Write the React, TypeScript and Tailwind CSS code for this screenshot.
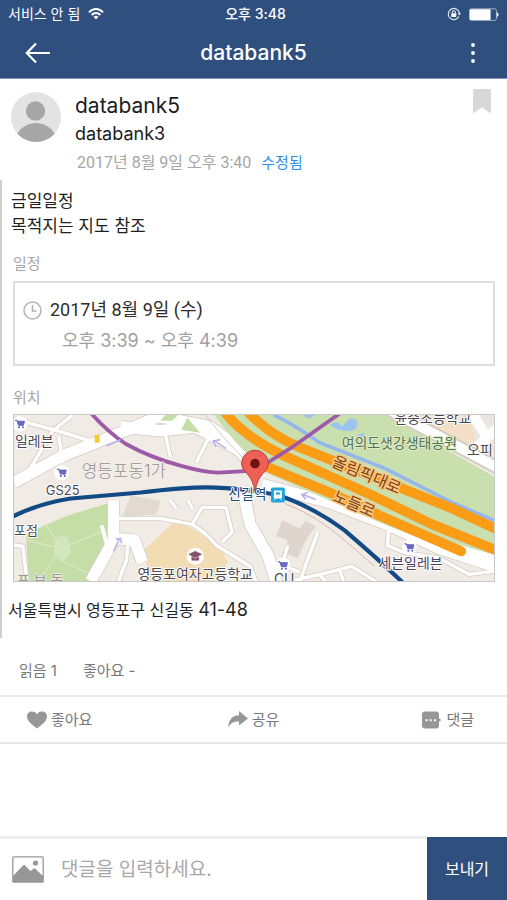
import React from 'react';

function StatusBar() {
  return (
    <div className="grid h-7 grid-cols-3 items-center px-2 text-sm leading-5">
      <div className="flex items-center gap-2">
        <span>서비스 안 됨</span>
        <svg viewBox="0 0 16 12" className="h-3 w-4" aria-hidden="true">
          <g fill="none" stroke="white" strokeWidth="1.9">
            <path d="M1 4.3C5-.1 11-.1 15 4.3" />
            <path d="M3.6 7C6.2 4.3 9.8 4.3 12.4 7" />
          </g>
          <path d="M5.5 8.7Q8 6.6 10.5 8.7L8 11.5z" fill="white" />
        </svg>
      </div>
      <div className="pl-1 text-center font-medium">오후 3:48</div>
      <div className="flex items-center justify-end gap-2">
        <svg viewBox="0 0 14 14" className="size-3.5" aria-hidden="true">
          <path d="M11.9 9.6A5.6 5.6 0 1 1 12.4 6" fill="none" stroke="#dde5f0" strokeWidth="1.2" />
          <path d="M10.6 6h3.4l-1.6 2.6z" fill="#dde5f0" />
          <rect x="4.3" y="6.2" width="5" height="3.8" rx="0.5" fill="white" />
          <path d="M5.3 6.4V5.2a1.5 1.5 0 0 1 3 0v1.2" fill="none" stroke="white" />
        </svg>
        <svg viewBox="0 0 30 13" className="h-[13px] w-[30px]" aria-hidden="true">
          <rect x="0.5" y="0.8" width="27" height="11.6" rx="2" fill="none" stroke="#b9c8de" strokeWidth="0.8" />
          <rect x="0.8" y="1.2" width="20.8" height="10.8" rx="1" fill="white" />
          <path d="M28.4 4.8q1.6 1.8 0 3.6z" fill="white" stroke="white" />
        </svg>
      </div>
    </div>
  );
}

function Header() {
  return (
    <header className="border-b border-[#7f97bb] bg-[#2f4f7f] text-white">
      <StatusBar />
      <div className="flex h-[50px] items-center justify-between px-[25px]">
        <button type="button" aria-label="뒤로" className="w-[26px]">
          <svg viewBox="0 0 26 22" className="h-[22px] w-[26px]" fill="none" stroke="white" strokeWidth="2.2">
            <path d="M25 11H2M11 1.5L1.8 11L11 20.5" />
          </svg>
        </button>
        <h1 className="text-[21px] leading-7 font-medium">databank5</h1>
        <button type="button" aria-label="메뉴" className="flex w-[26px] justify-end pr-[7px]">
          <svg viewBox="0 0 4 22" className="h-[22px] w-1" fill="white">
            <circle cx="2" cy="3" r="1.9" />
            <circle cx="2" cy="11" r="1.9" />
            <circle cx="2" cy="19" r="1.9" />
          </svg>
        </button>
      </div>
    </header>
  );
}

function Profile() {
  return (
    <div className="flex h-[101px] items-start pt-[13px] pr-4 pl-[11px]">
      <svg viewBox="0 0 50 50" className="size-[50px] shrink-0" aria-hidden="true">
        <defs>
          <clipPath id="avatar">
            <circle cx="25" cy="25" r="25" />
          </clipPath>
        </defs>
        <g clipPath="url(#avatar)">
          <rect width="50" height="50" fill="#e3e3e3" />
          <circle cx="24.5" cy="19" r="9.7" fill="#a6a6a6" />
          <path d="M4 46C12 26 38 26 46 46V52H4z" fill="#a6a6a6" />
        </g>
      </svg>
      <div className="ml-[14px] min-w-0 flex-1">
        <div className="text-[21px] leading-7 text-[#1c1c1c]">databank5</div>
        <div className="text-lg leading-7 text-[#1c1c1c]">databank3</div>
        <div className="mt-[3px] flex gap-[10px] pl-[2px] font-['Roboto','Noto_Sans_CJK_KR',sans-serif] text-base leading-6 text-[#a6a6a6]">
          <span>2017년 8월 9일 오후 3:40</span>
          <span className="text-[15px] text-[#2a90ee]">수정됨</span>
        </div>
      </div>
      <button type="button" aria-label="북마크" className="-mt-[3px]">
        <svg viewBox="0 0 18 25" className="h-[25px] w-[18px]">
          <path d="M0 1.5Q0 0 1.5 0H16.500Q18 0 18 1.500V24.500L9 18.500L0 24.500z" fill="#d8d8d8" />
        </svg>
      </button>
    </div>
  );
}

function Cart({ x, y }: { x: number; y: number }) {
  return (
    <g transform={`translate(${x} ${y})`}>
      <circle r="7.500" fill="white" />
      <path d="M-5-3.500H-3L-1.500 1.500H3.500L4.500-2.500H-3" fill="#6a6cc4" stroke="#5c5fc0" strokeWidth="1" />
      <circle cx="-1" cy="3.500" r="1" fill="#5c5fc0" />
      <circle cx="3" cy="3.500" r="1" fill="#5c5fc0" />
    </g>
  );
}

const streets = [
  'M13 418L60 431L92 441',
  'M72 414L52 430L28 470',
  'M58 436L62 462',
  'M190 430L238 438Q250 446 256 462',
  'M165 434L170 456',
  'M208 438L196 462',
  'M118 518H160L192 524Q206 532 216 545L250 566L256 581',
  'M192 524L202 507H226L232 532L222 542',
  'M170 500L176 508M188 500L192 508',
  'M128 536L126 560L118 581',
  'M300 581L318 532M288 545L282 565L300 572M290 581L330 572L352 566L376 581',
  'M390 520L388 545L404 552L440 558L470 574L495 571',
  'M340 570L344 581M320 575L326 581',
  'M13 545L22 546L26 581',
];

const avenues = [
  'M13 482L60 456L130 428L162 414',
  'M120 426L160 430L195 426L240 450L262 478',
  'M150 414L210 426L250 456',
  'M113 500V540L90 581',
  'M113 538L134 540L142 562',
  'M244 494L250 524L268 555L276 581',
  'M262 484L330 502L390 525L440 548L495 566',
];

function LocationMap() {
  return (
    <svg
      viewBox="13 414 482 167"
      preserveAspectRatio="xMidYMid slice"
      className="block h-full w-full"
      role="img"
      aria-label="신길역 주변 지도"
    >
      <rect x="13" y="414" width="482" height="167" fill="#f1ebe5" />

      <path d="M25 534Q45 524 67 515L107 503L109 552L93 581H28z" fill="#c5dda6" />
      <path d="M54 540q6-8 14-2l2 14-8 10-9-8z" fill="#d3e5bb" />
      <path d="M26 540L60 548L104 530M60 560L92 575M45 524L60 548L38 581" fill="none" stroke="#d9e9c4" strokeWidth="1.200" />
      <path d="M143 550L173 522L190 527L218 545L228 562L213 581H150z" fill="#f2dcb4" />
      <path d="M130 495L160 500L156 514L122 516z" fill="#e2dad0" />
      <path d="M282 520L300 528L306 520L316 526L306 540L298 558L284 552L288 540L276 536z" fill="#ddd5ce" />

      <g fill="none" stroke="#d3cac3" strokeLinejoin="round">
        {streets.map((d) => (
          <path key={d} d={d} strokeWidth="5" />
        ))}
        {avenues.map((d) => (
          <path key={d} d={d} strokeWidth="13" />
        ))}
      </g>
      <g fill="none" stroke="white" strokeLinejoin="round">
        {streets.map((d) => (
          <path key={d} d={d} strokeWidth="3.500" />
        ))}
        {avenues.map((d) => (
          <path key={d} d={d} strokeWidth="11.500" />
        ))}
      </g>
      <path d="M101 525L108 550" stroke="white" strokeWidth="4" />
      <path d="M165 414H178L172 420H160z M187 417L200 432L181 429z" fill="#c5dda6" />
      <path d="M205 414Q228 444 262 476" fill="none" stroke="#cfc8c8" />

      <path d="M214 414H386L495 476V556L462 554L380 522L270 474Q238 448 214 414z" fill="#cadfae" />
      <path d="M398 414H495V458z" fill="#f3dfc8" />
      <path d="M470 414H495V458L478 446z" fill="#ece6e2" />
      <path d="M388 408L500 468" stroke="#d3cac3" strokeWidth="14" />
      <path d="M388 408L500 468M500 426L478 446M474 414L490 440" stroke="white" strokeWidth="10" fill="none" />
      <path d="M462 545L500 556V572L462 560z" fill="white" />

      <path d="M303 414Q308 421 316 414z M330 424Q338 418 342 426L350 418Q358 416 358 424Q356 432 346 430Q336 430 330 424z M358 434l6-2 2 4-6 2z" fill="#9cc4ee" />
      <path d="M274 414Q298 426 320 442L386 468L453 502L495 520" fill="none" stroke="#93b7ec" strokeWidth="3.500" />

      <g fill="none" stroke="#eda038" strokeWidth="10" strokeLinecap="round">
        <path d="M245 408Q268 434 303 448L453 508L500 530" />
        <path d="M222 408Q244 438 293 459L373 495L433 524L500 551" />
        <path d="M264 465L330 492L380 515L462 551" />
      </g>
      <g fill="none" stroke="#fb9d14" strokeWidth="9" strokeLinecap="round">
        <path d="M245 408Q268 434 303 448L453 508L500 530" />
        <path d="M222 408Q244 438 293 459L373 495L433 524L500 551" />
        <path d="M264 465L330 492L380 515L462 551" />
      </g>

      <path d="M90 412Q108 432 125 443Q150 457 180 465Q205 472 218 472L255 470L290 448L341 412" fill="none" stroke="#9d5aa8" strokeWidth="3.800" strokeLinejoin="round" />
      <path d="M12 516Q38 503 70 498L140 492Q190 486 215 487Q255 488 285 497Q315 508 345 530Q380 560 404 583" fill="none" stroke="#134a86" strokeWidth="4.200" />
      <path d="M285 503Q318 516 345 540L375 566" fill="none" stroke="#d9b4b0" />

      <g fill="none" stroke="#b5b0ee" strokeWidth="1.500">
        <path d="M106 445L120 439M226 448L214 440M220 439L213 440L216 446M316 499L303 494M308 492L302 494L306 499M113 551L119 538M115 539L120 538L121 543" />
      </g>
      <path d="M94 434h5v8h-5z" fill="#f6c93a" />

      <Cart x={19} y={423} />
      <Cart x={61} y={472} />
      <Cart x={410} y={547} />
      <Cart x={283} y={565} />
      <circle cx="195" cy="556" r="8.500" fill="white" />
      <path d="M188.500 554L195 551L201.500 554L195 557.500z M191.500 556.500V560H198.500V556.500L195 558.500z" fill="#84506a" stroke="#84506a" strokeWidth="0.500" />

      <g fontSize="14" fill="#4b4550" stroke="white" strokeWidth="2" strokeLinejoin="round" paintOrder="stroke">
        <text x="14" y="445">일레븐</text>
        <text x="45" y="494" fontSize="13">GS25</text>
        <text x="13" y="535" fontSize="13">포점</text>
        <text x="228" y="499" fill="#1f4b78">신길역</text>
        <text x="137" y="579">영등포여자고등학교</text>
        <text x="379" y="568" fill="#4a3f66">세븐일레븐</text>
        <text x="274" y="584">CU</text>
        <text x="395" y="422">윤중초등학교</text>
        <text x="468" y="454">오피</text>
        <text x="342" y="447" fill="#547350" stroke="#dcebc9">여의도샛강생태공원</text>
        <text x="81" y="476" fontSize="17" fontWeight="300" fill="#97908d" stroke="#f4efeb">영등포동1가</text>
        <text x="16" y="585" fill="#9c978c" stroke="#e8eadb">표 보 동</text>
      </g>
      <g fontSize="16" fill="#7c4310" stroke="#fbc684" strokeWidth="3" strokeLinejoin="round" paintOrder="stroke">
        <text transform="translate(331 465) rotate(23)">올림픽대로</text>
        <text transform="translate(332 500) rotate(23)">노들로</text>
      </g>

      <rect x="271" y="487" width="14" height="15" rx="2" fill="#20a5dc" />
      <path d="M274 490h8v8h-8z" fill="white" />
      <path d="M275.500 491.500h5v3h-5z M274 500l2-2M282 500l-2-2" fill="#20a5dc" stroke="white" strokeWidth="0.800" />
      <path d="M255 491Q253 479 247 473Q241.500 468 241.500 463A13.500 13.500 0 0 1 268.500 463Q268.500 468 263 473Q257 479 255 491z" fill="#ef5f55" stroke="#b8423c" strokeWidth="1" />
      <circle cx="255" cy="463" r="4.800" fill="#6d1411" />
    </svg>
  );
}

function Post() {
  return (
    <article className="h-[458px] border-l-2 border-[#cfcfcf] pr-3 pl-[9px]">
      <p className="pt-[9px] text-[17px] leading-[25px] text-[#1f1f1f]">
        금일일정
        <br />
        목적지는 지도 참조
      </p>
      <h2 className="mt-[15px] ml-[2px] text-[15px] leading-5 text-[#a6a6a6]">일정</h2>
      <section className="mt-[7px] ml-[2px] h-[85px] border-2 border-[#dedede] pt-[13px] pl-2 text-lg leading-7">
        <div className="flex items-center gap-2">
          <svg viewBox="0 0 19 19" className="size-[19px]" fill="none" stroke="#b3b3b3" strokeWidth="1.5" aria-hidden="true">
            <circle cx="9.500" cy="9.500" r="8.500" />
            <path d="M9.500 4V10H13.500" />
          </svg>
          <span className="font-['Roboto','Noto_Sans_CJK_KR',sans-serif] text-[#2e2e2e]">2017년 8월 9일 (수)</span>
        </div>
        <div className="mt-[3px] pl-[39px] text-[#a0a0a0]">오후 3:39 ~ 오후 4:39</div>
      </section>
      <h2 className="mt-[22px] ml-[2px] text-[15px] leading-5 text-[#a6a6a6]">위치</h2>
      <div className="mt-[6px] ml-[2px] h-[168px] border border-[#c8c8c8]">
        <LocationMap />
      </div>
      <p className="mt-4 -ml-[3px] text-base leading-6 text-[#1f1f1f]">
        서울특별시 영등포구 신길동 <span className="text-lg leading-6">41-48</span>
      </p>
    </article>
  );
}

function Actions() {
  return (
    <div className="grid h-[49px] grid-cols-3 items-center border-y-2 border-[#e8e8e8] text-[15px] leading-6 text-[#777]">
      <button type="button" className="ml-[27px] flex items-center gap-1 justify-self-start">
        <svg viewBox="0 0 20 18" className="h-[18px] w-5" fill="#979797" aria-hidden="true">
          <path d="M10 17.500C6 14 0 10.500 0 5.400C0 2.200 2.300.5 5 .5C7.400.5 9.200 1.800 10 3.500C10.800 1.800 12.600.5 15 .5C17.700.5 20 2.200 20 5.400C20 10.500 14 14 10 17.500z" />
        </svg>
        좋아요
      </button>
      <button type="button" className="flex items-center gap-1 justify-self-center">
        <svg viewBox="0 0 20 17" className="h-[17px] w-5" fill="#979797" aria-hidden="true">
          <path d="M11 0L20 7.500L11 14.500V10.500C5.500 10.500 2.500 12 .5 16.500C.3 9 4 4.500 11 4.200z" />
        </svg>
        공유
      </button>
      <button type="button" className="mr-[33px] flex items-center gap-1 justify-self-end">
        <svg viewBox="0 0 20 18" className="h-[18px] w-5" aria-hidden="true">
          <path d="M3 .5H14Q17 .5 17 3.500V7.500L19.500 9L17 10.500V14.500Q17 17.500 14 17.500H3Q0 17.500 0 14.500V3.500Q0 .5 3 .5z" fill="#979797" />
          <path d="M3.500 8.200h2v2h-2zM7.700 8.200h2v2h-2zM12 8.200h2v2h-2z" fill="white" />
        </svg>
        댓글
      </button>
    </div>
  );
}

function Composer() {
  return (
    <form className="mt-auto flex h-16 items-stretch" onSubmit={(e) => e.preventDefault()}>
      <div className="flex min-w-0 flex-1 items-center border-t-[3px] border-[#ededed] pl-3">
        <button type="button" aria-label="사진 첨부" className="shrink-0">
          <svg viewBox="0 0 32 27" className="h-[27px] w-8" aria-hidden="true">
            <rect x="0.800" y="0.800" width="30.400" height="25.400" rx="1" fill="none" stroke="#979797" strokeWidth="1.300" />
            <circle cx="23.500" cy="7" r="2.600" fill="#979797" />
            <path d="M1 20L12 8.500L18.500 15L22.500 12L31 20V26H1z" fill="#979797" />
          </svg>
        </button>
        <input
          type="text"
          aria-label="댓글"
          placeholder="댓글을 입력하세요."
          className="ml-[17px] min-w-0 flex-1 bg-transparent text-[19px] leading-7 text-[#333] outline-none placeholder:text-[#a8a8a8]"
        />
      </div>
      <button type="submit" className="mt-px w-20 bg-[#2f4f7f] text-base leading-6 text-white">
        보내기
      </button>
    </form>
  );
}

export default function App() {
  return (
    <div className="flex min-h-screen flex-col bg-white font-['Inter','Noto_Sans_CJK_KR',sans-serif]">
      <Header />
      <main>
        <Profile />
        <Post />
        <div className="flex h-[57px] items-center gap-[26px] pt-[9px] pl-[19px] text-[15px] leading-5 text-[#777]">
          <span>읽음 1</span>
          <span>좋아요 -</span>
        </div>
        <Actions />
      </main>
      <Composer />
    </div>
  );
}
